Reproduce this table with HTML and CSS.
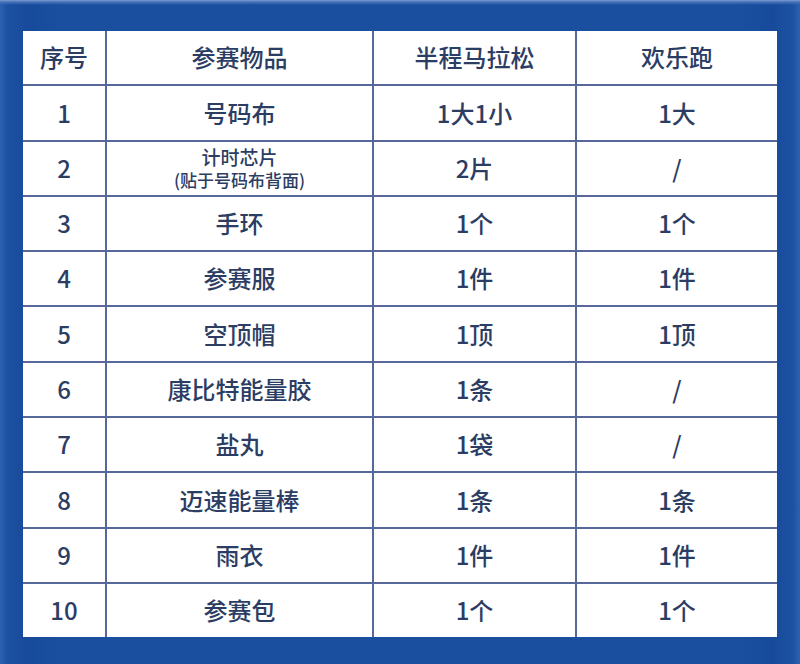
FILE: index.html
```html
<!DOCTYPE html>
<html lang="zh-CN">
<head>
<meta charset="utf-8">
<title>参赛物品</title>
<link rel="stylesheet" href="styles.css">
</head>
<body>
<div class="frame">
  <table class="kit">
    <colgroup>
      <col class="c-no"><col class="c-item"><col class="c-half"><col class="c-fun">
    </colgroup>
    <thead>
      <tr><th>序号</th><th>参赛物品</th><th>半程马拉松</th><th>欢乐跑</th></tr>
    </thead>
    <tbody>
      <tr><td>1</td><td>号码布</td><td>1大1小</td><td>1大</td></tr>
      <tr><td>2</td><td class="small"><span class="l1">计时芯片</span><span class="l2">(贴于号码布背面)</span></td><td>2片</td><td>/</td></tr>
      <tr><td>3</td><td>手环</td><td>1个</td><td>1个</td></tr>
      <tr><td>4</td><td>参赛服</td><td>1件</td><td>1件</td></tr>
      <tr><td>5</td><td>空顶帽</td><td>1顶</td><td>1顶</td></tr>
      <tr><td>6</td><td>康比特能量胶</td><td>1条</td><td>/</td></tr>
      <tr><td>7</td><td>盐丸</td><td>1袋</td><td>/</td></tr>
      <tr><td>8</td><td>迈速能量棒</td><td>1条</td><td>1条</td></tr>
      <tr><td>9</td><td>雨衣</td><td>1件</td><td>1件</td></tr>
      <tr><td>10</td><td>参赛包</td><td>1个</td><td>1个</td></tr>
    </tbody>
  </table>
</div>
</body>
</html>
```

FILE: styles.css
```css
html, body {
  margin: 0;
  padding: 0;
}
body {
  width: 800px;
  height: 664px;
  overflow: hidden;
  background: #1a4f9f;
  font-family: "Noto Sans CJK SC", "Noto Sans", sans-serif;
}
.frame {
  box-sizing: border-box;
  height: 664px;
  padding: 31px 23px 0 23px;
  background:
    linear-gradient(to bottom, #7d9bcc 0, #4573b9 2px, rgba(26,79,159,0) 5px),
    linear-gradient(to right, #2c60b2 0, #1d51a1 7px, #174a9b 28px, rgba(23,74,155,0) 60px),
    linear-gradient(to left, #2c60b2 0, #1d51a1 7px, #174a9b 28px, rgba(23,74,155,0) 60px),
    #1a4f9f;
}
.kit {
  width: 754px;
  border-collapse: collapse;
  border-style: hidden;
  background: #ffffff;
  table-layout: fixed;
  color: #2c3d63;
}
.c-no { width: 83px; }
.c-item { width: 267px; }
.c-half { width: 203px; }
.c-fun { width: 201px; }
.kit th, .kit td {
  border: 2px solid #56699a;
  height: 53.3px;
  padding: 0;
  text-align: center;
  vertical-align: middle;
  font-size: 24px;
  font-weight: 500;
  line-height: 1.2;
}
.kit td.small span {
  display: block;
  line-height: 23px;
}
.kit td.small .l1 {
  font-size: 19px;
}
.kit td.small .l2 {
  font-size: 17px;
}
```
